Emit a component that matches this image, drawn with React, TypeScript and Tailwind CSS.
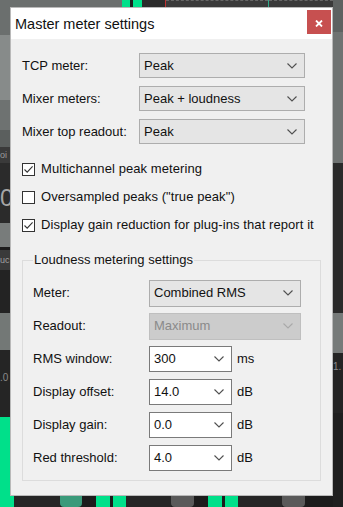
import type { ReactNode } from "react";

const FONT = "font-['Liberation_Sans',Arial,sans-serif]";

function Chevron({ disabled }: { disabled?: boolean }) {
  return (
    <svg
      width="10"
      height="6"
      viewBox="0 0 10 6"
      className={disabled ? "text-[#a9a9a9]" : "text-[#505050]"}
    >
      <path d="M0.5 0.5 L5 5 L9.5 0.5" fill="none" stroke="currentColor" strokeWidth="1.1" />
    </svg>
  );
}

function Dropdown({ value, disabled, className }: { value: string; disabled?: boolean; className: string }) {
  return (
    <div
      className={`flex items-center justify-between border pl-[4px] pr-[7px] text-[13px] ${
        disabled
          ? "border-[#bfbfbf] bg-[#cccccc] text-[#8a8a8a]"
          : "border-[#adadad] bg-[#e5e5e5] text-[#111]"
      } ${className}`}
    >
      <span>{value}</span>
      <Chevron disabled={disabled} />
    </div>
  );
}

function Combo({ value, unit }: { value: string; unit: string }) {
  return (
    <div className="flex items-center gap-[5px]">
      <div className="flex h-[26px] w-[83px] items-center justify-between border border-[#7a7a7a] bg-white pl-[4px] pr-[7px] text-[13px] text-[#111]">
        <span>{value}</span>
        <Chevron />
      </div>
      <span className="text-[13px] text-[#111]">{unit}</span>
    </div>
  );
}

function Checkbox({ checked, label }: { checked: boolean; label: string }) {
  return (
    <div className="flex h-[28px] items-center gap-[6px]">
      <div className="flex h-[13px] w-[13px] items-center justify-center border border-[#333] bg-white">
        {checked && (
          <svg width="11" height="11" viewBox="0 0 11 11">
            <path d="M1.5 5.5 L4.2 8.2 L9.6 2.4" fill="none" stroke="#333" strokeWidth="1.1" />
          </svg>
        )}
      </div>
      <span className="text-[13px] tracking-[0.08px] text-[#111]">{label}</span>
    </div>
  );
}

function Row({ label, children }: { label: string; children: ReactNode }) {
  return (
    <div className="flex h-[26px] items-center">
      <span className="w-[116px] text-[13px] text-[#111]">{label}</span>
      {children}
    </div>
  );
}

function Band({ h, bg, children }: { h: string; bg: string; children?: ReactNode }) {
  return <div className={`${h} ${bg} shrink-0`}>{children}</div>;
}

export default function App() {
  return (
    <div className={`flex h-[507px] w-[343px] overflow-hidden bg-[#222] ${FONT}`}>
      {/* mixer behind, left edge */}
      <div className="flex w-[10px] shrink-0 flex-col">
        <Band h="h-[35px]" bg="bg-[#6b6f6e]" />
        <Band h="h-[65px]" bg="bg-[#878b8a]" />
        <Band h="h-[30px]" bg="bg-[#6e7271]" />
        <Band h="h-[17px]" bg="bg-[#5b5f5e]" />
        <Band h="h-[16px]" bg="bg-[#3a3a3a]">
          <span className="block text-[9px] leading-[16px] text-[#9a9a9a]">oi</span>
        </Band>
        <Band h="h-[60px]" bg="bg-[#2b2b2b]">
          <span className="mt-[20px] block text-[24px] leading-[30px] text-[#a5a5a5]">0</span>
        </Band>
        <Band h="h-[24px]" bg="bg-[#787c7b]" />
        <Band h="h-[3px]" bg="bg-[#1c1c1c]" />
        <Band h="h-[20px]" bg="bg-[#3a3a3a]">
          <span className="block text-[9px] leading-[20px] text-[#a0a0a0]">uc</span>
        </Band>
        <Band h="h-[43px]" bg="bg-[#232323]" />
        <Band h="h-[37px]" bg="bg-[#737876]" />
        <Band h="h-[67px]" bg="bg-[#252525]">
          <span className="mt-[20px] block text-[10px] text-[#8a8a8a]">.0</span>
        </Band>
        <Band h="h-[90px]" bg="bg-[#00e08a]" />
      </div>

      <div className="flex w-[323px] shrink-0 flex-col">
        {/* mixer behind, top */}
        <div className="flex h-[7px] shrink-0">
          <div className="w-[112px] bg-[#6b6f6e]" />
          <div className="w-[8px] bg-[#00e08a]" />
          <div className="w-[3px] bg-[#1e1e1e]" />
          <div className="w-[9px] bg-[#00e08a]" />
          <div className="w-[23px] bg-[#2b2b2b]" />
          <div className="w-[1px] bg-[#c03030]" />
          <div className="w-[102px] border-t border-dashed border-[#666] bg-[#3a3a3a]" />
          <div className="w-[1px] bg-[#2fa88a]" />
          <div className="flex-1 border-t border-dashed border-[#666] bg-[#3a3a3a]" />
        </div>

        {/* dialog */}
        <div className="relative flex h-[489px] shrink-0 flex-col border border-[#b9b9b9] bg-[#f0f0f0]">
          <div className="flex h-[31px] shrink-0 items-start justify-between bg-white">
            <span className="mt-[7px] ml-[4px] text-[14.5px] leading-[18px] text-[#111]">
              Master meter settings
            </span>
            <div className="mt-[2px] mr-[1px] flex h-[24px] w-[24px] items-center justify-center bg-[#c75050]">
              <svg width="8" height="7" viewBox="0 0 8 7" className="mt-[3px]">
                <path d="M1 0.5 L7 6.5 M7 0.5 L1 6.5" stroke="#fff" strokeWidth="1.8" />
              </svg>
            </div>
          </div>

          <div className="flex flex-col pl-[11px] pt-[14px]">
            <div className="flex flex-col gap-[8px]">
              <div className="flex h-[25px] items-center">
                <span className="w-[117px] text-[13px] text-[#111]">TCP meter:</span>
                <Dropdown value="Peak" className="h-[25px] w-[166px]" />
              </div>
              <div className="flex h-[25px] items-center">
                <span className="w-[117px] text-[13px] text-[#111]">Mixer meters:</span>
                <Dropdown value="Peak + loudness" className="h-[25px] w-[166px]" />
              </div>
              <div className="flex h-[25px] items-center">
                <span className="w-[117px] text-[13px] text-[#111]">Mixer top readout:</span>
                <Dropdown value="Peak" className="h-[25px] w-[166px]" />
              </div>
            </div>

            <div className="mt-[11px] flex flex-col">
              <Checkbox checked label="Multichannel peak metering" />
              <Checkbox checked={false} label={'Oversampled peaks ("true peak")'} />
              <Checkbox checked label="Display gain reduction for plug-ins that report it" />
            </div>

            <div className="mt-[21px] mr-[11px] flex flex-col border border-[#dcdcdc] pl-[10px] pb-[9px]">
              <span className="-mt-[9px] self-start bg-[#f0f0f0] px-[1px] text-[13px] leading-[16px] text-[#111]">
                Loudness metering settings
              </span>
              <div className="mt-[12px] flex flex-col gap-[7px]">
                <Row label="Meter:">
                  <Dropdown value="Combined RMS" className="h-[27px] w-[152px]" />
                </Row>
                <Row label="Readout:">
                  <Dropdown value="Maximum" disabled className="h-[27px] w-[152px]" />
                </Row>
                <Row label="RMS window:">
                  <Combo value="300" unit="ms" />
                </Row>
                <Row label="Display offset:">
                  <Combo value="14.0" unit="dB" />
                </Row>
                <Row label="Display gain:">
                  <Combo value="0.0" unit="dB" />
                </Row>
                <Row label="Red threshold:">
                  <Combo value="4.0" unit="dB" />
                </Row>
              </div>
            </div>
          </div>
        </div>

        {/* mixer behind, bottom */}
        <div className="flex h-[11px] shrink-0 bg-[#1c1c1c]">
          <div className="w-[4px] bg-[#00e08a]" />
          <div className="w-[46px] bg-[#262626]" />
          <div className="w-[22px] rounded-b-[4px] bg-[#3a9a7a]" />
          <div className="w-[14px]" />
          <div className="w-[14px] bg-[#00e08a]" />
          <div className="w-[3px]" />
          <div className="w-[13px] bg-[#00e08a]" />
          <div className="w-[45px] bg-[#262626]" />
          <div className="w-[23px] rounded-b-[4px] bg-[#5a5a5a]" />
          <div className="w-[14px]" />
          <div className="w-[14px] bg-[#00e08a]" />
          <div className="w-[3px]" />
          <div className="w-[13px] bg-[#00e08a]" />
          <div className="w-[44px] bg-[#262626]" />
          <div className="w-[23px] rounded-b-[4px] bg-[#5a5a5a]" />
        </div>
      </div>

      {/* mixer behind, right edge */}
      <div className="flex w-[10px] shrink-0 flex-col">
        <Band h="h-[32px]" bg="bg-[#5e6261]" />
        <Band h="h-[131px]" bg="bg-[#6f7372]" />
        <Band h="h-[150px]" bg="bg-[#2a2a2a]" />
        <Band h="h-[40px]" bg="bg-[#767a79]" />
        <Band h="h-[60px]" bg="bg-[#242424]">
          <span className="block text-[10px] leading-[28px] text-[#8a8a8a]">1.</span>
        </Band>
        <Band h="h-[94px]" bg="bg-[#1f1f1f]" />
      </div>
    </div>
  );
}
